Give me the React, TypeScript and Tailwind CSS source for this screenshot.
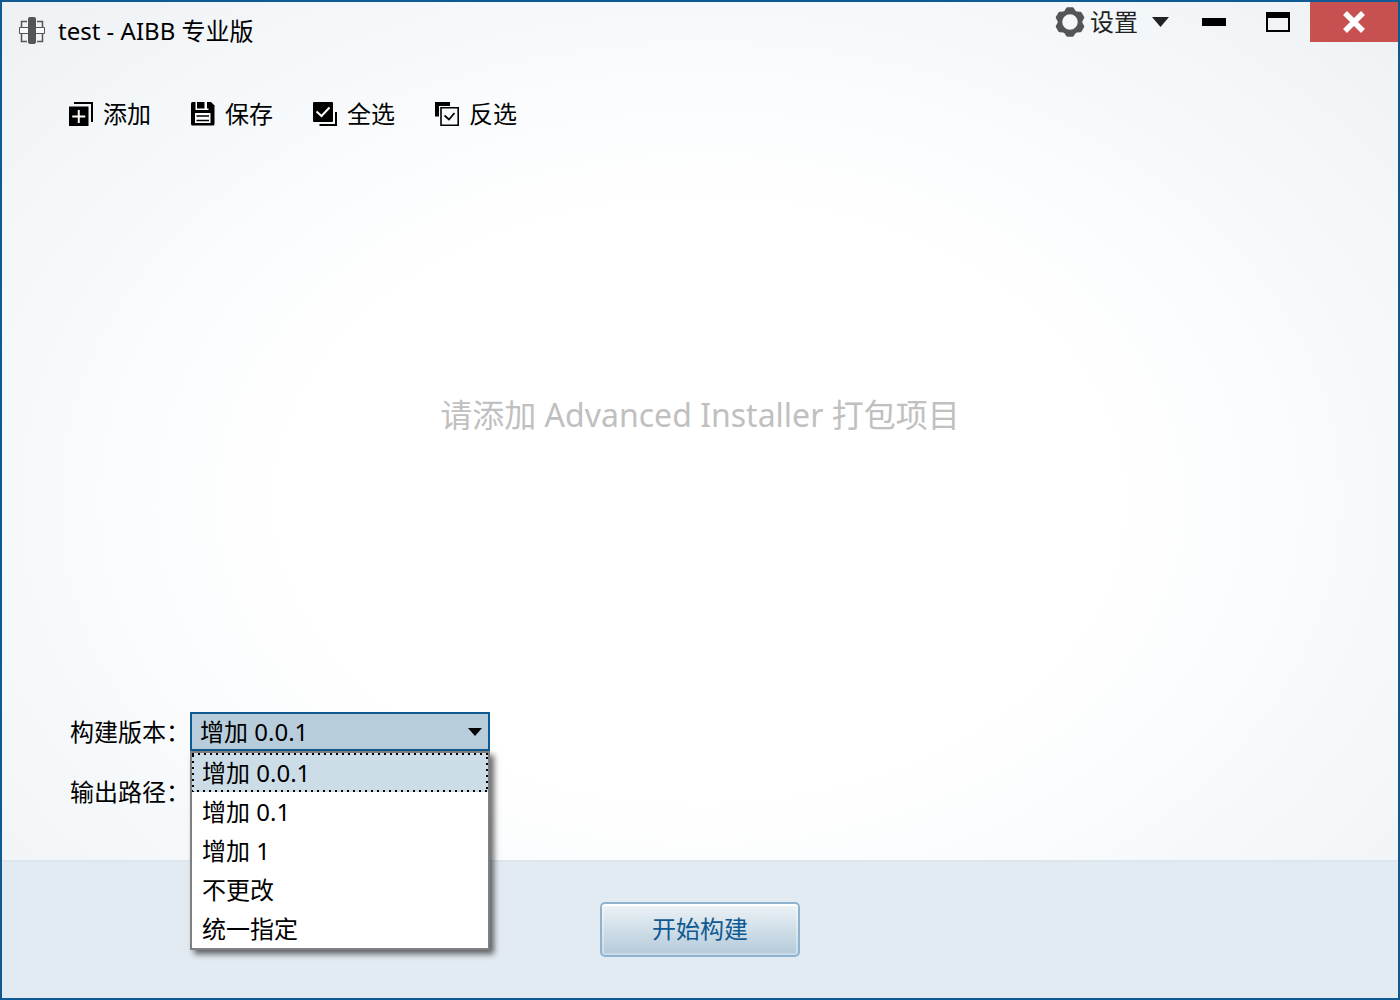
import { useState, type ReactNode } from "react"

const versionOptions = ["增加 0.0.1", "增加 0.1", "增加 1", "不更改", "统一指定"]

function LogoIcon() {
  return (
    <svg viewBox="0 0 26 28" className="h-7 w-[26px]" fill="none" stroke="#555555">
      <path d="M8 4.500H2.500V10M18 4.500h5.500V10M8 24.500H2.500V17M18 24.500h5.500V17" strokeWidth="1.500" />
      <path d="M0.500 10.500h25v6h-25z" fill="#f8fafb" />
      <path d="M9 2q0-2 2-2h4q2 0 2 2v23q0 2-2 2h-4q-2 0-2-2z" fill="#555555" stroke="none" />
    </svg>
  )
}

function GearIcon() {
  return (
    <svg viewBox="-15 -15 30 30" className="h-[30px] w-[30px]" fill="#555555" stroke="#555555">
      <circle r="10" fill="none" strokeWidth="4.500" />
      <g strokeWidth="3" strokeLinejoin="round">
        <path d="M-2.500-13.300h5L4.500-10h-9z" />
        <path d="M-2.500-13.300h5L4.500-10h-9z" transform="rotate(60)" />
        <path d="M-2.500-13.300h5L4.500-10h-9z" transform="rotate(120)" />
        <path d="M-2.500-13.300h5L4.500-10h-9z" transform="rotate(180)" />
        <path d="M-2.500-13.300h5L4.500-10h-9z" transform="rotate(240)" />
        <path d="M-2.500-13.300h5L4.500-10h-9z" transform="rotate(300)" />
      </g>
    </svg>
  )
}

function AddIcon() {
  return (
    <svg viewBox="0 0 24 24" className="h-6 w-6">
      <path d="M5 0h19v20h-2V2H5z" />
      <path d="M0 4.500h19.500V24H0z" />
      <path d="M9.750 8v13M3.250 14.500h13" stroke="white" strokeWidth="2" />
    </svg>
  )
}

function SaveIcon() {
  return (
    <svg viewBox="0 0 24 24" className="h-6 w-6">
      <path d="M1.500 0H20l3.500 3.500v18.500q0 1.500-1.500 1.500H1.500Q0 23.500 0 22V1.500Q0 0 1.500 0z" />
      <path d="M4.500 0h13v8h-13z" fill="white" />
      <path d="M6 0h7.500v6.500H6zM16 0h2v6.500h-2z" />
      <path d="M4 11h15.500v10H4z" fill="white" />
      <path d="M5.500 14h12.500M5.500 18.500h12.500" stroke="black" strokeWidth="1.500" />
    </svg>
  )
}

function SelectAllIcon() {
  return (
    <svg viewBox="0 0 24 24" className="h-6 w-6">
      <path d="M1 0h18a1 1 0 0 1 1 1v18a1 1 0 0 1-1 1H1a1 1 0 0 1-1-1V1a1 1 0 0 1 1-1z" />
      <path d="M3.500 9.500l5 4.500 8-8.500" fill="none" stroke="white" strokeWidth="2" />
      <path d="M6.500 23H23V10" fill="none" stroke="black" strokeWidth="2" />
    </svg>
  )
}

function InvertIcon() {
  return (
    <svg viewBox="0 0 24 24" className="h-6 w-6" fill="none" stroke="black">
      <path d="M2 14.500V2H15" strokeWidth="4" />
      <path d="M4.500 4.500H24V24H4.500z" fill="#f8fafc" stroke="none" />
      <path d="M6 5.800h17.200v17.400H6z" strokeWidth="1.600" />
      <path d="M9.500 13.500l4.500 4 5.500-6.500" strokeWidth="1.700" />
    </svg>
  )
}

function ToolButton({ icon, children }: { icon: ReactNode; children: ReactNode }) {
  return (
    <button type="button" className="flex items-center gap-[10px]">
      {icon}
      <span>{children}</span>
    </button>
  )
}

function TitleBar() {
  return (
    <header className="flex h-[60px] items-start justify-between pl-[17px]">
      <div className="flex h-[58px] items-center gap-[13px]">
        <LogoIcon />
        <h1>test - AIBB 专业版</h1>
      </div>
      <div className="flex h-10 items-center">
        <button type="button" className="flex items-center gap-[5px] text-[#222222]">
          <GearIcon />
          <span>设置</span>
          <svg viewBox="0 0 17 10" className="ml-[9px] h-[10px] w-[17px]" fill="#222222">
            <path d="M0 0h17l-8.500 10z" />
          </svg>
        </button>
        <button type="button" aria-label="最小化" className="ml-[13px] flex h-10 w-16 items-center justify-center">
          <span className="h-2 w-6 bg-black" />
        </button>
        <button type="button" aria-label="最大化" className="flex h-10 w-16 items-center justify-center">
          <span className="h-5 w-6 border-2 border-t-[6px] border-black" />
        </button>
        <button type="button" aria-label="关闭" className="flex h-10 w-[88px] items-center justify-center bg-[#c75050]">
          <svg viewBox="0 0 22 22" className="h-[22px] w-[22px]" stroke="white" strokeWidth="5.500">
            <path d="M2 2l18 18M20 2L2 20" />
          </svg>
        </button>
      </div>
    </header>
  )
}

function VersionSelect() {
  const [value, setValue] = useState(versionOptions[0])
  const [open, setOpen] = useState(true)

  return (
    <div className="relative w-[300px]">
      <select
        id="version"
        value={value}
        onChange={(e) => setValue(e.target.value)}
        onMouseDown={(e) => {
          e.preventDefault()
          setOpen(!open)
        }}
        className="block h-[39px] w-full appearance-none border-2 border-[#0f5a92] bg-[#b7cddb] px-2 outline-none"
      >
        {versionOptions.map((option) => (
          <option key={option}>{option}</option>
        ))}
      </select>
      <svg viewBox="0 0 14 8" className="pointer-events-none absolute top-4 right-2 h-2 w-[14px]">
        <path d="M0 0h14L7 8z" />
      </svg>
      {open && (
        <ul
          role="listbox"
          className="absolute top-full left-0 z-10 w-full border-2 border-[#808080] bg-white shadow-[4px_4px_6px_rgba(0,0,0,0.6)]"
        >
          {versionOptions.map((option) => (
            <li
              key={option}
              role="option"
              aria-selected={option === value}
              onClick={() => {
                setValue(option)
                setOpen(false)
              }}
              className="group relative flex h-[39px] items-center px-[10px] aria-selected:bg-[#cddde7]"
            >
              {option}
              <svg className="pointer-events-none absolute inset-0 hidden h-full w-full group-aria-selected:block">
                <rect width="100%" height="100%" fill="none" stroke="black" strokeWidth="4" strokeDasharray="2 4" />
              </svg>
            </li>
          ))}
        </ul>
      )}
    </div>
  )
}

export default function App() {
  return (
    <div className="flex min-h-screen flex-col border-2 border-[#0f5a92] bg-[radial-gradient(ellipse_farthest-corner_at_center,#ffffff_42%,#f3f7fa_80%,#edf1f4_100%)] font-['Noto_Sans','Noto_Sans_CJK_SC',sans-serif] text-2xl leading-8 text-black">
      <TitleBar />
      <nav className="flex gap-10 px-[67px] pt-9">
        <ToolButton icon={<AddIcon />}>添加</ToolButton>
        <ToolButton icon={<SaveIcon />}>保存</ToolButton>
        <ToolButton icon={<SelectAllIcon />}>全选</ToolButton>
        <ToolButton icon={<InvertIcon />}>反选</ToolButton>
      </nav>
      <main className="flex grow flex-col">
        <div className="flex grow items-center justify-center pb-3">
          <p className="text-[32px] leading-10 text-[#c0c0c0]">请添加 Advanced Installer 打包项目</p>
        </div>
        <div className="flex flex-col gap-[21px] px-[68px] pb-[49px]">
          <div className="flex h-[39px] items-center">
            <label htmlFor="version" className="w-[120px]">构建版本：</label>
            <VersionSelect />
          </div>
          <div className="flex h-[39px] items-center">
            <span className="w-[120px]">输出路径：</span>
          </div>
        </div>
      </main>
      <footer className="flex h-[138px] items-center justify-center border-t-2 border-[#dce6ef] bg-[#e3ebf2] pb-[2px]">
        <button
          type="button"
          className="h-[55px] w-[200px] rounded-[5px] border-2 border-[#8fb3cf] bg-linear-to-b from-[#eef3f6] to-[#b3cada] text-[#0f5a92] shadow-[inset_0_2px_0_#ffffff,inset_0_0_0_2px_rgba(255,255,255,0.3)]"
        >
          开始构建
        </button>
      </footer>
    </div>
  )
}
